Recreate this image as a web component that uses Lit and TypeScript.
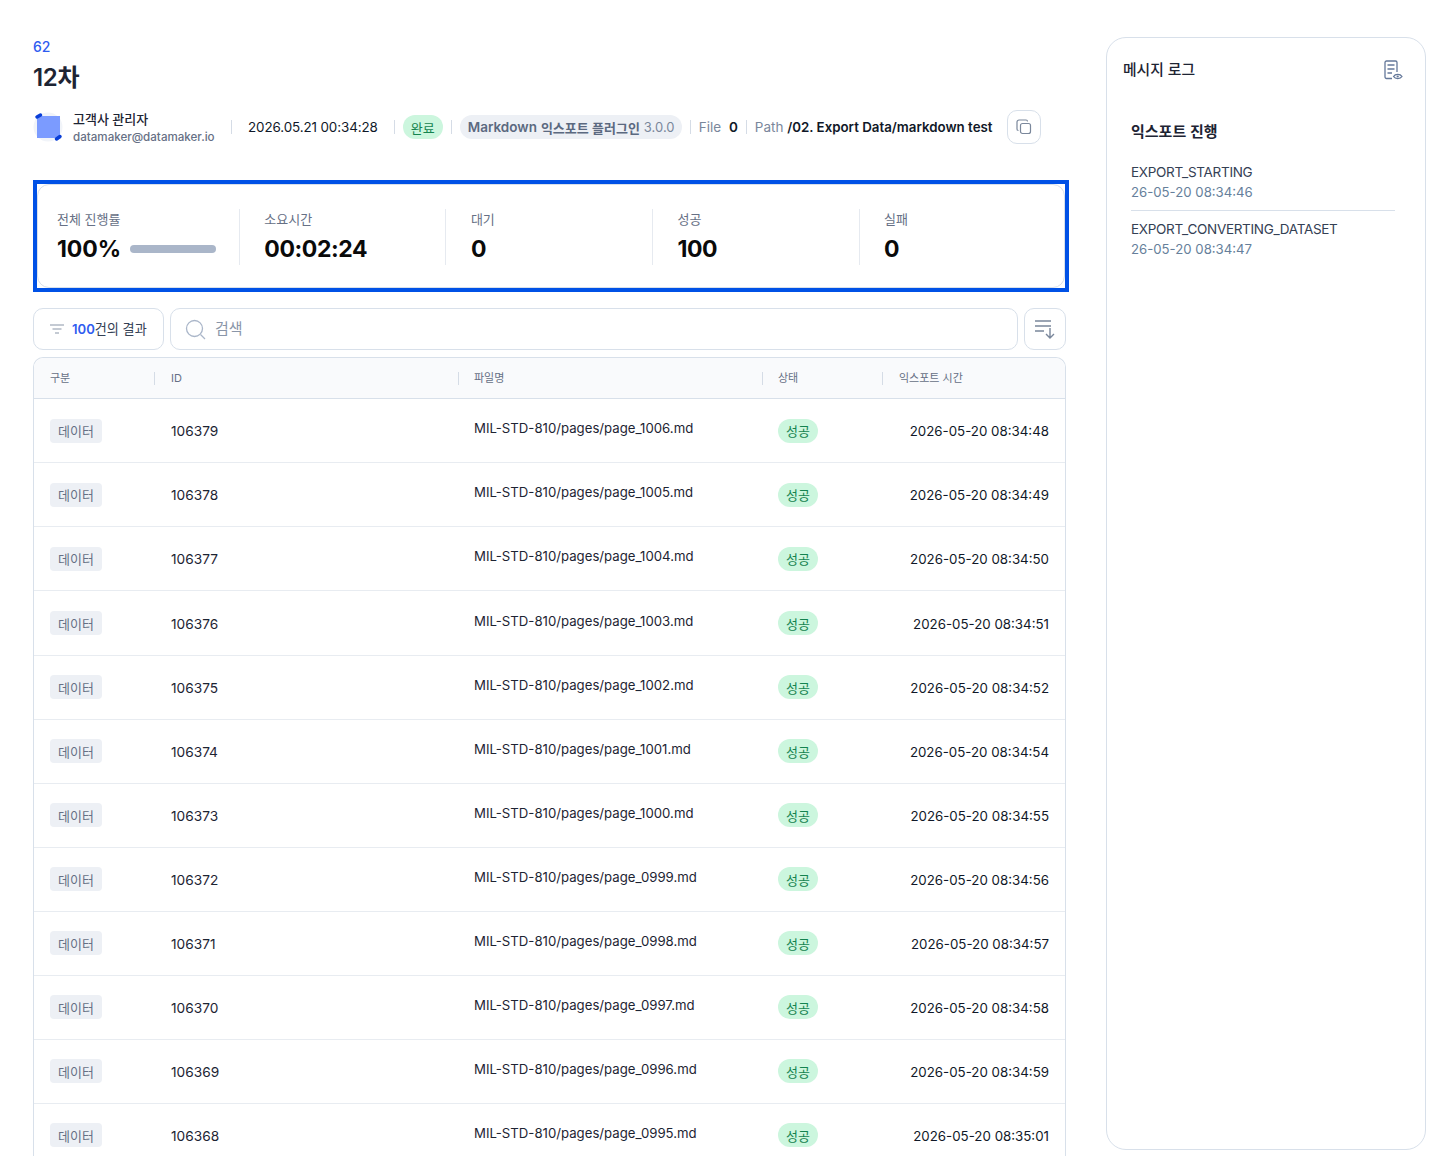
import { LitElement, html, css } from 'lit';
import { customElement } from 'lit/decorators.js';

const rows = [
    ['106379', 'page_1006', '08:34:48'],
    ['106378', 'page_1005', '08:34:49'],
    ['106377', 'page_1004', '08:34:50'],
    ['106376', 'page_1003', '08:34:51'],
    ['106375', 'page_1002', '08:34:52'],
    ['106374', 'page_1001', '08:34:54'],
    ['106373', 'page_1000', '08:34:55'],
    ['106372', 'page_0999', '08:34:56'],
    ['106371', 'page_0998', '08:34:57'],
    ['106370', 'page_0997', '08:34:58'],
    ['106369', 'page_0996', '08:34:59'],
    ['106368', 'page_0995', '08:35:01'],
];

const stats = [
    ['소요시간', '00:02:24'],
    ['대기', '0'],
    ['성공', '100'],
    ['실패', '0'],
];

@customElement('app-root')
export class AppRoot extends LitElement {

    static styles = css`
    :host {
        display: block;
        width: 1432px;
        height: 1156px;
        overflow: hidden;
        background: #fff;
        color: #101828;
        font-family: Inter, "Noto Sans CJK KR", sans-serif;
        font-size: 14px;
    }

    .page {
        display: flex;
        align-items: flex-start;
        padding: 37px 6px 0 33px;
        gap: 37px;
    }

    main {
        width: 1036px;
        flex: none;
    }

    .num {
        color: #2f5cf0;
        font-size: 14px;
        font-weight: 500;
        line-height: 20px;
    }

    h1 {
        margin: 5px 0 0;
        font-size: 24px;
        font-weight: 600;
        line-height: 32px;
        color: #1d2433;
        letter-spacing: -0.3px;
    }

    .meta {
        display: flex;
        align-items: center;
        height: 34px;
        margin-top: 16px;
        width: 1008px;
    }

    .avatar {
        width: 30px;
        height: 30px;
        flex: none;
        margin-right: 9px;
    }

    .user { width: 159px; flex: none; padding-top: 1px; }
    .user b { display: block; font-size: 13px; font-weight: 500; line-height: 18px; color: #1d2433; margin-left: 1px; }
    .user span { display: block; font-size: 11.6px; font-weight: 500; line-height: 18px; color: #667085; white-space: nowrap; margin-left: 1px; }

    .sep {
        width: 1px;
        height: 14px;
        background: #d5dce6;
        flex: none;
    }

    .date { margin: 0 16px; white-space: nowrap; font-size: 13.4px; color: #101828; letter-spacing: -0.1px; }

    .badge-ok {
        display: inline-flex;
        align-items: center;
        justify-content: center;
        width: 40px;
        height: 24px;
        border-radius: 12px;
        background: #ccf6de;
        color: #14834f;
        font-size: 13px;
        flex: none;
    }

    .plugin {
        display: flex;
        align-items: center;
        gap: 4px;
        height: 24px;
        margin: 0 8px;
        padding: 0 8px;
        border-radius: 12px;
        background: #edf0f5;
        color: #5b6980;
        font-size: 13.5px;
        font-weight: 600;
        white-space: nowrap;
        width: 206px;
        flex: none;
    }

    .plugin em { font-style: normal; font-size: 13px; }
    .plugin span { color: #7a879b; font-weight: 400; font-size: 13px; }

    .file { margin: 0 8px; color: #7a879b; font-size: 13.5px; white-space: nowrap; }
    .file b { margin-left: 4px; color: #101828; font-weight: 600; }

    .path { margin-left: 8px; color: #7a879b; font-size: 13.5px; white-space: nowrap; }
    .path b { color: #101828; font-weight: 600; font-size: 13.3px; }

    .icon-btn {
        display: flex;
        align-items: center;
        justify-content: center;
        box-sizing: border-box;
        flex: none;
        border: 1px solid #d8e0ea;
        border-radius: 10px;
        background: #fff;
    }

    .copy { width: 34px; height: 34px; margin-left: 14px; }

    .progress-box {
        box-sizing: border-box;
        width: 1036px;
        height: 112px;
        margin-top: 36px;
        border: 4px solid #0051e6;
    }

    .stats {
        display: flex;
        align-items: center;
        box-sizing: border-box;
        height: 104px;
        padding: 2px 19px 0;
        border: 1px solid #d8e0ea;
        border-radius: 12px;
    }

    .stat {
        box-sizing: border-box;
        width: 206.6px;
        height: 56px;
        padding-left: 24.5px;
        border-left: 1px solid #e6eaf0;
        flex: none;
    }

    .stat.first {
        width: 181.8px;
        padding-left: 0;
        border-left: none;
    }

    .stat label {
        display: block;
        height: 20px;
        color: #667085;
        font-size: 13px;
        line-height: 20px;
    }

    .stat strong {
        display: block;
        margin-top: 5px;
        color: #0a0a0a;
        font-size: 23px;
        font-weight: 700;
        line-height: 30px;
        letter-spacing: -0.4px;
    }

    .first strong { letter-spacing: -0.1px; }

    .rate { display: flex; align-items: center; gap: 9px; }

    .bar {
        width: 86px;
        height: 8px;
        margin-top: 5px;
        border-radius: 4px;
        background: #aab6c9;
    }

    .toolbar {
        display: flex;
        gap: 6px;
        width: 1033px;
        height: 42px;
        margin-top: 16px;
    }

    .filter {
        display: flex;
        align-items: center;
        gap: 7px;
        box-sizing: border-box;
        width: 131px;
        padding-left: 15px;
        border: 1px solid #d8e0ea;
        border-radius: 10px;
        font-size: 13.1px;
        color: #344054;
        white-space: nowrap;
    }

    .filter span { padding-bottom: 1px; }
    .filter b { color: #2f5cf0; font-weight: 600; }

    .search {
        display: flex;
        align-items: center;
        gap: 9px;
        box-sizing: border-box;
        flex: 1;
        padding-left: 14px;
        border: 1px solid #d8e0ea;
        border-radius: 10px;
        color: #8a95a8;
        font-size: 15px;
    }

    .search span { padding-bottom: 4px; }

    .sort { width: 42px; height: 42px; }

    .table {
        box-sizing: border-box;
        width: 1033px;
        margin-top: 7px;
        border: 1px solid #d8e0ea;
        border-bottom: none;
        border-radius: 10px 10px 0 0;
    }

    .row {
        display: grid;
        grid-template-columns: 120px 304px 304px 120px 1fr;
        align-items: center;
        box-sizing: border-box;
        height: 64.05px;
        border-bottom: 1px solid #e8ecf1;
        font-size: 14px;
        color: #1d2433;
    }

    .row > div { padding: 0 16px; white-space: nowrap; }

    .head {
        height: 41.35px;
        background: #f9fafc;
        border-radius: 10px 10px 0 0;
        border-bottom: 1px solid #d8e0ea;
        color: #667085;
        font-size: 11px;
    }

    .head > div { height: 13px; line-height: 13px; display: flex; align-items: center; }
    .head > div + div { border-left: 1px solid #d5dce6; padding-left: 15px; }
    .head > div:nth-child(2), .head > div:last-child { padding-left: 16px; }

    .tag {
        display: inline-flex;
        align-items: center;
        justify-content: center;
        width: 52px;
        height: 24px;
        border-radius: 4px;
        background: #edf0f5;
        color: #667085;
        font-size: 13px;
        vertical-align: middle;
    }

    .id { font-size: 13.7px; padding-left: 17px !important; padding-top: 1px !important; }

    .name { padding-bottom: 5px !important; font-size: 13.2px; }

    .row .badge-ok { vertical-align: middle; }

    .time { text-align: right; color: #101828; font-size: 13.3px; padding-top: 1px !important; }

    aside {
        box-sizing: border-box;
        width: 320px;
        height: 1113px;
        flex: none;
        padding: 0 16px;
        border: 1px solid #d8e0ea;
        border-radius: 20px;
    }

    .side-head {
        display: flex;
        align-items: center;
        justify-content: space-between;
        height: 60px;
        padding-right: 6px;
        font-size: 14.8px;
        font-weight: 500;
        color: #1d2433;
    }

    .doc { margin-top: 4px; }

    .log { padding: 0 14px 0 8px; margin-top: 22px; }

    h2 {
        margin: 0 0 18px;
        font-size: 15px;
        font-weight: 600;
        line-height: 24px;
        color: #1d2433;
    }

    .item { padding-bottom: 8px; font-size: 13.5px; line-height: 20px; color: #344054; letter-spacing: -0.3px; }
    .item + .item { border-top: 1px solid #d8e0ea; padding-top: 8px; }
    .item span { display: block; color: #667f9b; letter-spacing: 0; font-size: 13.2px; }
    `;

    render() {
        return html`
        <div class="page">
            <main>
                <div class="num">62</div>
                <h1>12차</h1>
                <div class="meta">
                    <svg class="avatar" viewBox="0 0 30 30">
                        <circle cx="15" cy="15" r="14.500" fill="#f1f4f9"/>
                        <rect x="4" y="4" width="23" height="22" fill="#7b9bff"/>
                        <path d="M4 5 7.500 3M23.500 27 27 24.500" stroke="#0a3fd8" stroke-width="3.500" stroke-linecap="round" fill="none"/>
                    </svg>
                    <div class="user">
                        <b>고객사 관리자</b>
                        <span>datamaker@datamaker.io</span>
                    </div>
                    <i class="sep"></i>
                    <div class="date">2026.05.21 00:34:28</div>
                    <i class="sep"></i>
                    <span class="badge-ok" style="margin:0 8px">완료</span>
                    <i class="sep"></i>
                    <div class="plugin">Markdown <em>익스포트 플러그인</em> <span>3.0.0</span></div>
                    <i class="sep"></i>
                    <div class="file">File <b>0</b></div>
                    <i class="sep"></i>
                    <div class="path">Path <b>/02. Export Data/markdown test</b></div>
                    <div class="icon-btn copy">
                        <svg width="16" height="16" viewBox="0 0 16 16" fill="none" stroke="#7a879b" stroke-width="1.200">
                            <rect x="4.500" y="4.500" width="10" height="10" rx="2"/>
                            <path d="M11.500 2.500A1.500 1.500 0 0 0 10 1H3a2 2 0 0 0-2 2v7a1.500 1.500 0 0 0 1.500 1.500"/>
                        </svg>
                    </div>
                </div>

                <div class="progress-box">
                    <div class="stats">
                        <div class="stat first">
                            <label>전체 진행률</label>
                            <div class="rate"><strong>100%</strong><div class="bar"></div></div>
                        </div>
                        ${stats.map(s => html`
                            <div class="stat">
                                <label>${s[0]}</label>
                                <strong>${s[1]}</strong>
                            </div>
                        `)}
                    </div>
                </div>

                <div class="toolbar">
                    <div class="filter">
                        <svg width="16" height="16" viewBox="0 0 16 16" fill="none" stroke="#8a95a8" stroke-width="1.200">
                            <path d="M1 4h14M3.500 8h9M6 12h4"/>
                        </svg>
                        <span><b>100</b>건의 결과</span>
                    </div>
                    <div class="search">
                        <svg width="21" height="21" viewBox="0 0 21 21" fill="none" stroke="#aab6c9" stroke-width="1.300">
                            <circle cx="9.500" cy="9.500" r="8"/>
                            <path d="M15.500 15.500 20 20"/>
                        </svg>
                        <span>검색</span>
                    </div>
                    <div class="icon-btn sort">
                        <svg width="20" height="18" viewBox="0 0 20 18" fill="none" stroke="#7a879b" stroke-width="1.400" overflow="visible">
                            <path d="M0 1h16M0 6h16M0 11h9M15 8v10M11 14l4 4 4-4"/>
                        </svg>
                    </div>
                </div>

                <div class="table">
                    <div class="row head">
                        <div>구분</div>
                        <div>ID</div>
                        <div>파일명</div>
                        <div>상태</div>
                        <div>익스포트 시간</div>
                    </div>
                    ${rows.map(r => html`
                        <div class="row">
                            <div><span class="tag">데이터</span></div>
                            <div class="id">${r[0]}</div>
                            <div class="name">MIL-STD-810/pages/${r[1]}.md</div>
                            <div><span class="badge-ok">성공</span></div>
                            <div class="time">2026-05-20 ${r[2]}</div>
                        </div>
                    `)}
                </div>
            </main>

            <aside>
                <div class="side-head">
                    <span>메시지 로그</span>
                    <svg class="doc" width="19" height="20" viewBox="0 0 19 20" fill="none" stroke="#64789a" stroke-width="1.300">
                        <path d="M8 18.500H2.500A1.500 1.500 0 0 1 1 17V2.500A1.500 1.500 0 0 1 2.500 1h9A1.500 1.500 0 0 1 13 2.500V12"/>
                        <path d="M3.500 5h7M3.500 9h7M3.500 13h4.500"/>
                        <path d="M9.500 16.500c1.800-2.800 6.700-2.800 8.500 0-1.800 2.800-6.700 2.800-8.500 0z"/>
                        <circle cx="13.700" cy="16.500" r="1.100" fill="#64789a" stroke="none"/>
                    </svg>
                </div>
                <div class="log">
                    <h2>익스포트 진행</h2>
                    <div class="item">EXPORT_STARTING<span>26-05-20 08:34:46</span></div>
                    <div class="item">EXPORT_CONVERTING_DATASET<span>26-05-20 08:34:47</span></div>
                </div>
            </aside>
        </div>
        `;
    }
}
